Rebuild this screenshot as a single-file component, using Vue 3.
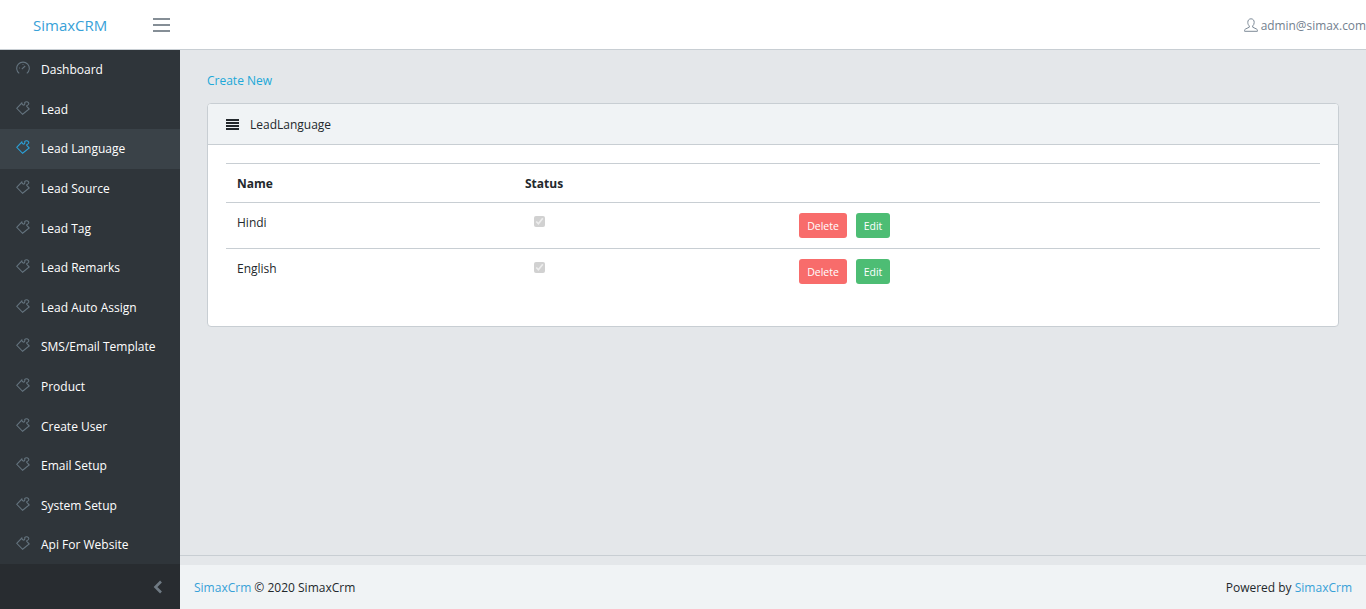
<script setup>
const menu = [
  { label: "Dashboard", icon: "gauge" },
  { label: "Lead", icon: "puzzle" },
  { label: "Lead Language", icon: "puzzle", active: true },
  { label: "Lead Source", icon: "puzzle" },
  { label: "Lead Tag", icon: "puzzle" },
  { label: "Lead Remarks", icon: "puzzle" },
  { label: "Lead Auto Assign", icon: "puzzle" },
  { label: "SMS/Email Template", icon: "puzzle" },
  { label: "Product", icon: "puzzle" },
  { label: "Create User", icon: "puzzle" },
  { label: "Email Setup", icon: "puzzle" },
  { label: "System Setup", icon: "puzzle" },
  { label: "Api For Website", icon: "puzzle" },
];

const rows = ["Hindi", "English"];
</script>

<template>
  <div class="app">
    <header class="topbar">
      <a class="brand">SimaxCRM</a>
      <span class="toggler"><i></i><i></i><i></i></span>
      <span class="user">
        <svg class="user-icon" viewBox="0 0 14 14" width="14" height="14" fill="none" stroke="currentColor" stroke-width="1">
          <path d="M7 .8c-2 0-3.200 1.500-3.200 3.600 0 1.500.6 2.800 1.500 3.500v1.300L1.500 11c-.6.3-.9.7-.9 1.300v1h12.800v-1c0-.6-.3-1-.9-1.300L8.700 9.200V7.900c.9-.7 1.500-2 1.500-3.500C10.200 2.300 9 .8 7 .8z" />
        </svg>
        admin@simax.com
      </span>
    </header>

    <div class="body">
      <aside class="sidebar">
        <nav class="nav">
          <a v-for="item in menu" :key="item.label" class="nav-link" :class="{ active: item.active }">
            <svg v-if="item.icon === 'gauge'" class="nav-icon" viewBox="0 0 14 14" width="14" height="14" fill="none" stroke="currentColor" stroke-width="1.100">
              <path d="M3.200 12.400A6.300 6.300 0 1 1 10.800 12.400" />
              <path d="M5.800 8.200 9.200 5" />
              <path d="M3.200 7h.8M7 3.200V4" />
            </svg>
            <svg v-else class="nav-icon" viewBox="0 0 14 14" width="14" height="14" fill="none" stroke="currentColor" stroke-width="1.100">
              <path d="M.7 7.300 5.800 2C6 3.500 7.400 4.600 8.400 3.800 9.200 3.100 8.600 2 8.800 1.300 9.800.4 11.500.5 12.400 1.600 13.200 2.600 12.600 3.800 11.500 4.200 10.600 4.500 10.400 5 11 5.700L13.200 8 6.600 13.300z" />
            </svg>
            <span>{{ item.label }}</span>
          </a>
        </nav>
        <div class="minimizer">
          <svg viewBox="0 0 10 14" width="10" height="14" fill="none" stroke="#6f7a83" stroke-width="2.600">
            <path d="M8 1.500 2.500 7 8 12.500" />
          </svg>
        </div>
      </aside>

      <div class="main">
        <main class="content">
          <a class="create">Create New</a>
          <section class="card">
            <div class="card-header">
              <span class="lines"><i></i><i></i><i></i><i></i></span>
              <span>LeadLanguage</span>
            </div>
            <div class="card-body">
              <table class="table">
                <thead>
                  <tr>
                    <th class="col-name">Name</th>
                    <th class="col-status">Status</th>
                    <th></th>
                  </tr>
                </thead>
                <tbody>
                  <tr v-for="row in rows" :key="row">
                    <td>{{ row }}</td>
                    <td><input class="check" type="checkbox" checked disabled></td>
                    <td>
                      <button class="btn red">Delete</button>
                      <button class="btn green">Edit</button>
                    </td>
                  </tr>
                </tbody>
              </table>
            </div>
          </section>
        </main>
        <footer class="footer">
          <span><a>SimaxCrm</a> © 2020 SimaxCrm</span>
          <span>Powered by <a>SimaxCrm</a></span>
        </footer>
      </div>
    </div>
  </div>
</template>

<style>
html,
body {
  margin: 0;
  overflow: hidden;
}
</style>

<style scoped>
.app {
  height: 609px;
  display: flex;
  flex-direction: column;
  font-family: "Open Sans", "Noto Sans", sans-serif;
  font-size: 12px;
  color: #23282c;
  background: #e4e7ea;
}

.topbar {
  height: 49px;
  flex: none;
  display: flex;
  align-items: center;
  background: #fff;
  border-bottom: 1px solid #c8ced3;
}

.brand {
  width: 139px;
  padding-left: 33px;
  box-sizing: border-box;
  color: #37a1d8;
  font-size: 15px;
}

.toggler {
  width: 17px;
  margin-left: 14px;
  display: flex;
  flex-direction: column;
  gap: 4px;
}

.toggler i {
  display: block;
  height: 2px;
  background: #858e96;
}

.user {
  margin-left: auto;
  display: flex;
  align-items: center;
  gap: 3px;
  color: #73818f;
  font-size: 11.900px;
  white-space: nowrap;
}

.user-icon {
  color: #7d8a97;
}

.body {
  flex: 1;
  min-height: 0;
  display: flex;
}

.sidebar {
  width: 180px;
  flex: none;
  display: flex;
  flex-direction: column;
  background: #2f353a;
}

.nav {
  flex: 1;
  min-height: 0;
}

.nav-link {
  height: 39.600px;
  padding-left: 16px;
  display: flex;
  align-items: center;
  gap: 11px;
  color: #fff;
  white-space: nowrap;
}

.nav-link.active {
  background: #3a4248;
}

.nav-icon {
  flex: none;
  margin-top: -3px;
  color: #64737e;
}

.active .nav-icon {
  color: #2c9fd6;
}

.minimizer {
  height: 45px;
  flex: none;
  padding-right: 17px;
  display: flex;
  align-items: center;
  justify-content: flex-end;
  background: #282c30;
}

.main {
  flex: 1;
  min-width: 0;
  display: flex;
  flex-direction: column;
}

.content {
  flex: 1;
  padding: 22px 27px 0;
  border-bottom: 1px solid #c8ced3;
  margin-bottom: 9px;
}

.create {
  display: block;
  height: 31px;
  line-height: 17px;
  color: #20a8d8;
}

.card {
  background: #fff;
  border: 1px solid #c8ced3;
  border-radius: 4px;
  overflow: hidden;
}

.card-header {
  height: 40px;
  padding-left: 18px;
  display: flex;
  align-items: center;
  gap: 11px;
  background: #f0f3f5;
  border-bottom: 1px solid #c8ced3;
}

.lines {
  width: 13px;
  display: flex;
  flex-direction: column;
  gap: 1px;
}

.lines i {
  display: block;
  height: 2px;
  background: #23282c;
}

.card-body {
  padding: 18px 18px 32px;
}

.table {
  width: 100%;
  border-collapse: collapse;
  table-layout: fixed;
}

.table th {
  height: 38px;
  padding: 0 11px;
  text-align: left;
  font-weight: 700;
  border-top: 1px solid #c8ced3;
  border-bottom: 1px solid #c8ced3;
}

.col-name {
  width: 266px;
}

.col-status {
  width: 252px;
}

.table td {
  height: 45px;
  padding: 0 11px 0;
  vertical-align: top;
  border-bottom: 1px solid #c8ced3;
  line-height: 39px;
}

.table tr:last-child td {
  border-bottom: 0;
}

.check {
  width: 11px;
  height: 11px;
  margin: 0 0 0 9px;
  vertical-align: 0;
}

.btn {
  width: 48px;
  height: 25px;
  margin: 10px 9px 0 0;
  padding: 0;
  vertical-align: top;
  border: 0;
  border-radius: 3px;
  font-family: inherit;
  font-size: 10.500px;
  color: #fff;
}

.red {
  background: #f86c6b;
}

.green {
  width: 34px;
  background: #4dbd74;
}

.footer {
  height: 44px;
  flex: none;
  padding: 0 14px;
  display: flex;
  align-items: center;
  justify-content: space-between;
  background: #f0f3f5;
}

.footer a {
  color: #37a1d8;
}
</style>
